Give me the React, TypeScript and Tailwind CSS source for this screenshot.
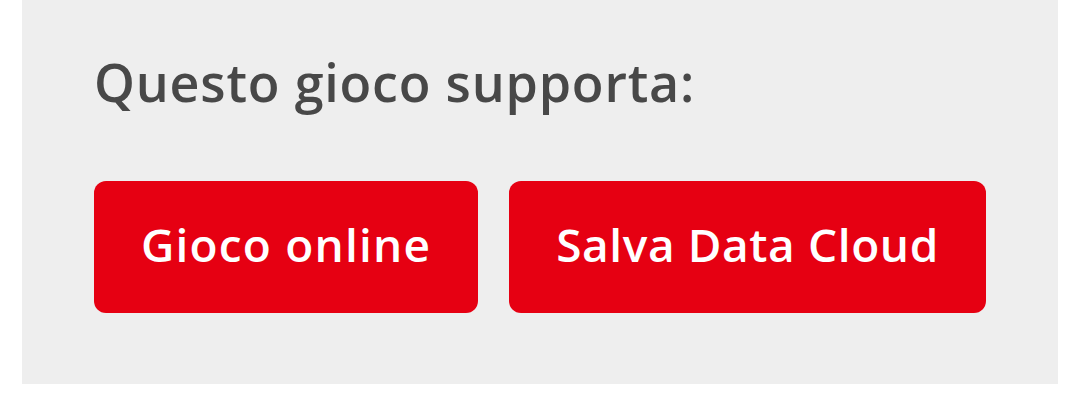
export default function App() {
  return (
    <div className="w-[1080px] h-[416px] bg-white" style={{ fontFamily: '"Open Sans", "Noto Sans", sans-serif' }}>
      <div className="ml-[22px] w-[1036px] h-[384px] bg-[#eeeeee] pl-[72px] pt-[50px]">
        <h2 className="text-[52px] leading-[64px] font-semibold text-[#484848] tracking-[0.8px]">Questo gioco supporta:</h2>
        <div className="mt-[67px] flex gap-[31px]">
          <div className="w-[384px] h-[132px] pb-[6px] rounded-[12px] bg-[#e60012] flex items-center justify-center text-white font-semibold text-[46px] tracking-[1.2px]">Gioco online</div>
          <div className="w-[477px] h-[132px] pb-[6px] rounded-[12px] bg-[#e60012] flex items-center justify-center text-white font-semibold text-[46px] tracking-[0.6px]">Salva Data Cloud</div>
        </div>
      </div>
    </div>
  );
}
